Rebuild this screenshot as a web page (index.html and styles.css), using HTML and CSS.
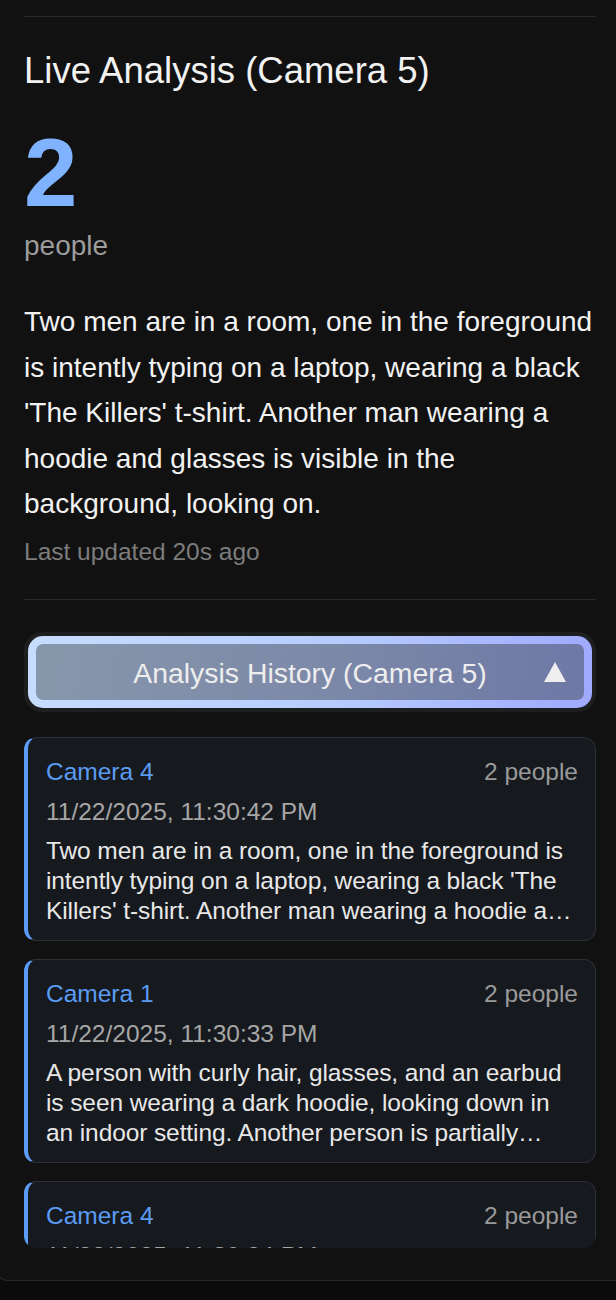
FILE: index.html
```html
<!DOCTYPE html>
<html lang="en">
<head>
<meta charset="utf-8">
<title>Live Analysis</title>
<link rel="stylesheet" href="styles.css">
</head>
<body>
<div class="panel">
  <div class="prev-tail"></div>
  <section class="live">
    <h2 class="live-title">Live Analysis (Camera 5)</h2>
    <div class="count">2</div>
    <div class="count-label">people</div>
    <p class="live-desc">Two men are in a room, one in the foreground is intently typing on a laptop, wearing a black 'The Killers' t-shirt. Another man wearing a hoodie and glasses is visible in the background, looking on.</p>
    <div class="updated">Last updated 20s ago</div>
  </section>
  <section class="history">
    <div class="toggle-wrap">
      <button class="toggle" type="button">
        <span class="toggle-inner">
          <span class="toggle-spacer"></span>
          <span class="toggle-text">Analysis History (Camera 5)</span>
          <svg class="toggle-arrow" width="22" height="20" viewBox="0 0 22 20"><polygon points="11,0 22,20 0,20" fill="#eeeeee"/></svg>
        </span>
      </button>
    </div>
    <div class="history-list">
      <article class="card">
        <div class="card-head"><span class="card-cam">Camera 4</span><span class="card-count">2 people</span></div>
        <div class="card-date">11/22/2025, 11:30:42 PM</div>
        <p class="card-desc">Two men are in a room, one in the foreground is intently typing on a laptop, wearing a black 'The Killers' t-shirt. Another man wearing a hoodie and glasses is visible in the background, looking on.</p>
      </article>
      <article class="card">
        <div class="card-head"><span class="card-cam">Camera 1</span><span class="card-count">2 people</span></div>
        <div class="card-date">11/22/2025, 11:30:33 PM</div>
        <p class="card-desc">A person with curly hair, glasses, and an earbud is seen wearing a dark hoodie, looking down in an indoor setting. Another person is partially visible in the background.</p>
      </article>
      <article class="card">
        <div class="card-head"><span class="card-cam">Camera 4</span><span class="card-count">2 people</span></div>
        <div class="card-date">11/22/2025, 11:30:24 PM</div>
        <p class="card-desc">Two men are in a room, one in the foreground is typing on a laptop while another man looks on from the background.</p>
      </article>
    </div>
  </section>
</div>
</body>
</html>
```

FILE: styles.css
```css
* { box-sizing: border-box; }
html, body {
  margin: 0;
  padding: 0;
  background: #0b0b0b;
  overflow: hidden;
}
body {
  width: 616px;
  height: 1300px;
  font-family: "Liberation Sans", Arial, sans-serif;
  color: #f0f0f0;
}
.panel {
  margin: 0 -8px 0 -3px;
  padding: 0 27px 32px 26px;
  background: #111111;
  border: 1px solid #2a2a2a;
  border-top: none;
  border-radius: 0 0 10px 10px;
}
.prev-tail { height: 16px; }
.live {
  border-top: 1px solid #2a2a2a;
  padding: 32px 0 33px;
}
.live-title {
  margin: 0;
  font-size: 36.5px;
  line-height: 43px;
  font-weight: 400;
  color: #f2f2f2;
}
.count {
  margin-top: 33px;
  font-size: 96px;
  line-height: 96px;
  font-weight: 700;
  color: #80b3ff;
}
.count-label {
  margin-top: 8px;
  font-size: 28px;
  line-height: 34px;
  color: #9c9c9c;
}
.live-desc {
  margin: 36px 0 0;
  font-size: 28px;
  line-height: 45.5px;
  color: #f2f2f2;
}
.updated {
  margin-top: 10px;
  font-size: 24.5px;
  line-height: 29px;
  color: #7c7c7c;
}
.history {
  border-top: 1px solid #2a2a2a;
  padding-top: 32px;
}
.toggle-wrap {
  padding: 4px;
  background: #1d1e20;
  border-radius: 18px;
}
.toggle {
  display: block;
  width: 100%;
  height: 72px;
  padding: 0;
  margin: 0;
  border: 8px solid transparent;
  border-radius: 15px;
  background:
    linear-gradient(100deg, #8797ab 0%, #7c88a8 55%, #6e78a6 100%) padding-box,
    linear-gradient(100deg, #c7ddff 0%, #b6ccff 55%, #9fa9ff 100%) border-box;
  font-family: inherit;
  cursor: pointer;
}
.toggle-inner {
  display: grid;
  grid-template-columns: 1fr auto 1fr;
  align-items: center;
  height: 100%;
  padding: 3px 18px 0;
}
.toggle-text {
  font-size: 28.4px;
  line-height: 34px;
  color: #eeeeee;
  white-space: nowrap;
}
.toggle-arrow {
  justify-self: end;
  display: block;
  margin-top: -2px;
}
.history-list {
  margin-top: 25px;
  height: 511px;
  overflow: hidden;
  border-radius: 12px;
  display: flex;
  flex-direction: column;
  gap: 18px;
}
.card {
  flex: none;
  height: 204px;
  background: #16191e;
  border: 1px solid #2d3137;
  border-left: 4px solid #5b9cf6;
  border-radius: 12px;
  padding: 19.5px 16px 15px 18px;
}
.card-head {
  display: flex;
  justify-content: space-between;
  font-size: 24.5px;
  line-height: 29.4px;
}
.card-cam { color: #5b9cf3; }
.card-count { color: #9a9a9a; margin-right: 1px; }
.card-date {
  margin-top: 10.5px;
  font-size: 24.5px;
  line-height: 29.4px;
  color: #a6a6a6;
}
.card-desc {
  margin: 10px 0 0;
  font-size: 24.5px;
  line-height: 29.6px;
  letter-spacing: -0.1px;
  color: #e8e8e8;
  display: -webkit-box;
  -webkit-box-orient: vertical;
  -webkit-line-clamp: 3;
  overflow: hidden;
}
```
